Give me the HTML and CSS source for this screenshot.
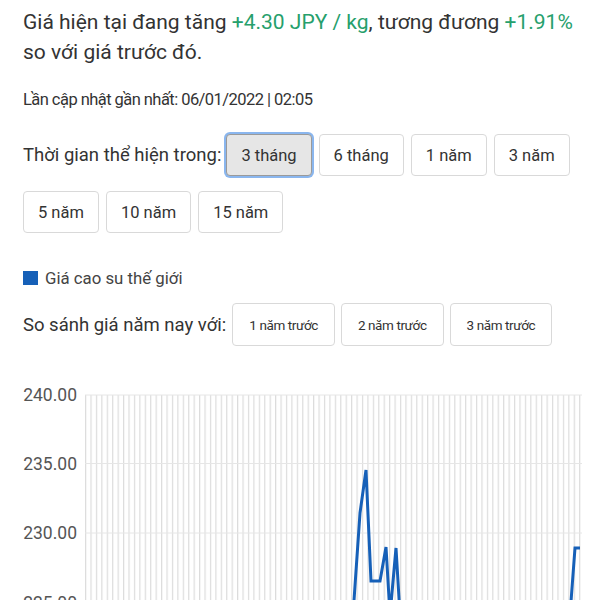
FILE: index.html
```html
<!DOCTYPE html>
<html lang="vi">
<head>
<meta charset="utf-8">
<title>Giá cao su</title>
<link rel="stylesheet" href="styles.css">
</head>
<body>
<main class="page">
  <p class="summary">Giá hiện tại đang tăng <span class="up">+4.30 JPY / kg</span>, tương đương <span class="up">+1.91%</span> so với giá trước đó.</p>
  <p class="updated">Lần cập nhật gần nhất: 06/01/2022 | 02:05</p>
  <div class="range">
    <span class="range-label">Thời gian thể hiện trong:</span>
    <button class="btn active">3 tháng</button>
    <button class="btn">6 tháng</button>
    <button class="btn">1 năm</button>
    <button class="btn">3 năm</button>
    <button class="btn">5 năm</button>
    <button class="btn">10 năm</button>
    <button class="btn">15 năm</button>
  </div>
  <div class="legend"><span class="swatch"></span>Giá cao su thế giới</div>
  <div class="compare">
    <span class="compare-label">So sánh giá năm nay với:</span>
    <button class="btn small">1 năm trước</button>
    <button class="btn small">2 năm trước</button>
    <button class="btn small">3 năm trước</button>
  </div>
</main>
<div class="chart">
  <svg class="chart-svg" width="600" height="260" viewBox="0 0 600 260">
    <defs>
      <pattern id="vgrid" patternUnits="userSpaceOnUse" x="85" y="0" width="5.43" height="10">
        <line x1="0.6" y1="0" x2="0.6" y2="10" stroke="#dcdcdc" stroke-width="1.2"/>
      </pattern>
    </defs>
    <rect x="85" y="25" width="497" height="240" fill="url(#vgrid)"/>
    <g stroke="#e6e6e6" stroke-width="1">
      <line x1="85" y1="25" x2="582" y2="25"/>
      <line x1="85" y1="93.5" x2="582" y2="93.5"/>
      <line x1="85" y1="163" x2="582" y2="163"/>
      <line x1="85" y1="232.5" x2="582" y2="232.5"/>
    </g>
    <g class="axis-label">
      <text x="77" y="25">240.00</text>
      <text x="77" y="93.5">235.00</text>
      <text x="77" y="163">230.00</text>
      <text x="77" y="232.5">225.00</text>
    </g>
    <polyline fill="none" stroke="#1660b8" stroke-width="3" stroke-linejoin="miter" points="353,245 360,143 366,100 371,211 380,211 386,177 390,245 396,178 400,245"/>
    <polyline fill="none" stroke="#1660b8" stroke-width="3" points="570,245 575,178 580,178"/>
  </svg>
</div>
</body>
</html>
```

FILE: styles.css
```css
html, body {
  margin: 0;
  padding: 0;
  background: #fff;
  overflow: hidden;
}
body {
  font-family: Roboto, "Noto Sans", "Liberation Sans", sans-serif;
  color: #333;
}
.page {
  padding: 7px 23px 0 23px;
}
.summary {
  margin: 0;
  font-size: 21px;
  line-height: 30px;
}
.up {
  color: #26a06c;
}
.updated {
  margin: 21px 0 0 0;
  font-size: 16.5px;
  letter-spacing: -0.55px;
  line-height: 24px;
}
.range {
  margin-top: 22px;
  display: flex;
  flex-wrap: wrap;
  align-items: center;
  column-gap: 7px;
  row-gap: 15px;
}
.range-label {
  font-size: 18.5px;
  margin-right: -2px;
}
.btn {
  font-family: Roboto, "Noto Sans", "Liberation Sans", sans-serif;
  font-size: 16.5px;
  color: #333;
  background: #fff;
  border: 1px solid #d9d9d9;
  border-radius: 4px;
  height: 42px;
  padding: 0 14px;
  margin: 0;
}
.btn.active {
  background: #e6e6e6;
  border-color: #9a9a9a;
  box-shadow: 0 0 0 2px #8ab6ee;
}
.btn.small {
  font-size: 13.5px;
  letter-spacing: -0.4px;
  height: 43px;
  padding: 0 16px;
}
.legend {
  margin-top: 35px;
  display: flex;
  align-items: center;
  font-size: 16.8px;
  color: #444;
  height: 20px;
}
.swatch {
  width: 15px;
  height: 14px;
  background: #1660b8;
  margin-right: 7px;
}
.compare {
  margin-top: 15px;
  display: flex;
  align-items: center;
  column-gap: 6px;
}
.compare-label {
  font-size: 18.5px;
  margin-right: 0;
}
.chart {
  margin-top: 24px;
}
.chart-svg {
  display: block;
}
.axis-label text {
  font-family: Roboto, "Noto Sans", "Liberation Sans", sans-serif;
  font-size: 17.5px;
  fill: #555;
  text-anchor: end;
  dominant-baseline: central;
}
```
